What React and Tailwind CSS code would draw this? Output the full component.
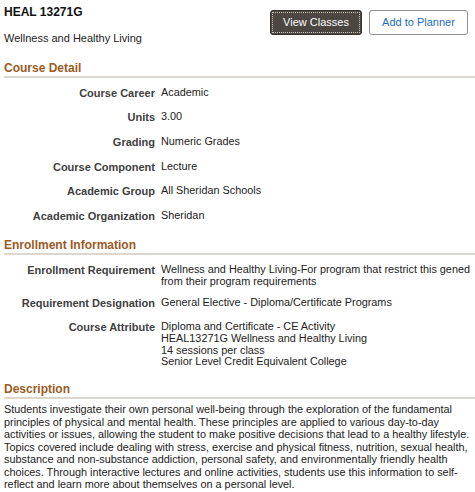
const courseDetail = [
  ["Course Career", ["Academic"]],
  ["Units", ["3.00"]],
  ["Grading", ["Numeric Grades"]],
  ["Course Component", ["Lecture"]],
  ["Academic Group", ["All Sheridan Schools"]],
  ["Academic Organization", ["Sheridan"]],
];

const enrollment = [
  [
    "Enrollment Requirement",
    ["Wellness and Healthy Living-For program that restrict this gened from their program requirements"],
  ],
  ["Requirement Designation", ["General Elective - Diploma/Certificate Programs"]],
  [
    "Course Attribute",
    [
      "Diploma and Certificate - CE Activity",
      "HEAL13271G Wellness and Healthy Living",
      "14 sessions per class",
      "Senior Level Credit Equivalent College",
    ],
  ],
];

function SectionHeader({ children, className = "" }) {
  return (
    <div
      className={`border-b-2 border-[#dcd6d0] pb-[1px] text-[12px] leading-[14px] font-bold text-[#9b5a1f] ${className}`}
    >
      {children}
    </div>
  );
}

function Row({ label, values, className = "" }) {
  return (
    <div className={`grid grid-cols-[151px_1fr] gap-x-[6px] ${className}`}>
      <div className="text-right text-[11px] leading-[12px] font-bold text-[#404040]">{label}</div>
      <div className="text-[10.85px] leading-[11.7px] text-[#222]">
        {values.map((v) => (
          <div key={v}>{v}</div>
        ))}
      </div>
    </div>
  );
}

export default function App() {
  return (
    <div
      className="h-[492px] w-[475px] overflow-hidden bg-white pt-[5px] pl-[4px]"
      style={{ fontFamily: '"Liberation Sans", Arial, sans-serif' }}
    >
      <div className="flex items-start">
        <div>
          <div className="text-[12px] leading-[14px] font-bold text-[#111]">HEAL 13271G</div>
          <div className="mt-[12.5px] text-[11px] leading-[13px] text-[#222]">Wellness and Healthy Living</div>
        </div>
        <div className="mt-[5px] mr-[7px] ml-auto flex gap-[7px]">
          <button
            type="button"
            className="h-[25px] w-[92px] rounded-[3px] border border-[#36322e] bg-[#4b4641] text-[11px] text-white outline-1 outline-offset-[-3px] outline-[#c9c5c0] outline-dotted"
          >
            View Classes
          </button>
          <button
            type="button"
            className="h-[25px] w-[99px] rounded-[3px] border border-[#8e8e8e] bg-white text-[11px] text-[#1b6ec2]"
          >
            Add to Planner
          </button>
        </div>
      </div>

      <SectionHeader className="mt-[16px]">Course Detail</SectionHeader>
      <div className="mt-[9px] flex flex-col gap-[12.7px]">
        {courseDetail.map(([l, v]) => (
          <Row key={l} label={l} values={v} />
        ))}
      </div>

      <SectionHeader className="mt-[16.5px]">Enrollment Information</SectionHeader>
      <div className="mt-[8.7px] flex flex-col">
        <Row label={enrollment[0][0]} values={enrollment[0][1]} />
        <Row label={enrollment[1][0]} values={enrollment[1][1]} className="mt-[9px]" />
        <Row label={enrollment[2][0]} values={enrollment[2][1]} className="mt-[12.7px]" />
      </div>

      <SectionHeader className="mt-[14px]">Description</SectionHeader>
      <p className="mt-[4px] pr-[2px] text-[10.85px] leading-[12.5px] text-[#222]">
        Students investigate their own personal well-being through the exploration of the fundamental principles of
        physical and mental health. These principles are applied to various day-to-day activities or issues, allowing
        the student to make positive decisions that lead to a healthy lifestyle. Topics covered include dealing with
        stress, exercise and physical fitness, nutrition, sexual health, substance and non-substance addiction,
        personal safety, and environmentally friendly health choices. Through interactive lectures and online
        activities, students use this information to self-reflect and learn more about themselves on a personal level.
      </p>
    </div>
  );
}
